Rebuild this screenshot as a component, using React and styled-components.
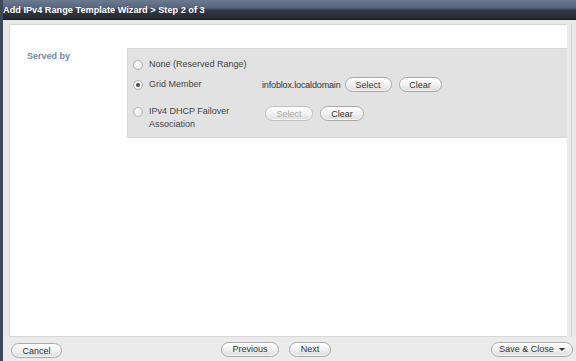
import React from "react";
import styled, { createGlobalStyle } from "styled-components";

const GlobalStyle = createGlobalStyle`
  html, body {
    margin: 0;
    padding: 0;
    background: #e9e9e9;
  }
  body {
    font-family: "Liberation Sans", Arial, sans-serif;
  }
`;

const App = () => {
  return (
    <>
      <GlobalStyle />
      <Window>
        <TitleBar>Add IPv4 Range Template Wizard &gt; Step 2 of 3</TitleBar>
        <Body>
          <Panel>
            <FieldRow>
              <FieldLabel>Served by</FieldLabel>
              <OptionBox>
                <OptionRow $height={14}>
                  <RadioLabel>
                    <Radio />
                    <span>None (Reserved Range)</span>
                  </RadioLabel>
                  <div />
                </OptionRow>
                <OptionRow $height={15} $gap={6}>
                  <RadioLabel>
                    <Radio checked />
                    <span>Grid Member</span>
                  </RadioLabel>
                  <Controls>
                    <MemberName>infoblox.localdomain</MemberName>
                    <PillButton $width={47}>Select</PillButton>
                    <PillButton $width={43}>Clear</PillButton>
                  </Controls>
                </OptionRow>
                <OptionRow $gap={13} $top>
                  <RadioLabel>
                    <Radio />
                    <span>
                      IPv4 DHCP Failover
                      <br />
                      Association
                    </span>
                  </RadioLabel>
                  <Controls $indent>
                    <PillButton $width={48} disabled>
                      Select
                    </PillButton>
                    <PillButton $width={44}>Clear</PillButton>
                  </Controls>
                </OptionRow>
              </OptionBox>
            </FieldRow>
          </Panel>
          <Gutter />
        </Body>
        <Footer>
          <div>
            <PillButton $width={51}>Cancel</PillButton>
          </div>
          <NavGroup>
            <PillButton $width={58}>Previous</PillButton>
            <PillButton $width={42}>Next</PillButton>
          </NavGroup>
          <RightGroup>
            <PillButton $width={82}>
              Save &amp; Close <Caret />
            </PillButton>
          </RightGroup>
        </Footer>
      </Window>
    </>
  );
};

export default App;

const Window = styled.div`
  width: 576px;
  height: 361px;
  display: flex;
  flex-direction: column;
  border-left: 3px solid #3e4858;
  box-sizing: border-box;
  background: #e9e9e9;
  overflow: hidden;
`;

const TitleBar = styled.div`
  height: 20px;
  margin-left: -3px;
  padding-left: 3px;
  display: flex;
  align-items: center;
  color: #ffffff;
  font-weight: bold;
  font-size: 9.2px;
  background: linear-gradient(
    #6d7b92 0%,
    #56647c 40%,
    #323844 55%,
    #26292f 100%
  );
  border-bottom: 1px solid #1c1e22;
  box-sizing: border-box;
`;

const Body = styled.div`
  flex: 1;
  display: flex;
  padding: 4px 0 0 6px;
  min-height: 0;
`;

const Panel = styled.div`
  flex: 1;
  background: #ffffff;
  border: 1px solid #d6d6d6;
  border-right: none;
  padding-top: 23px;
`;

const Gutter = styled.div`
  width: 9px;
  border-left: 1px solid #ececec;
  box-sizing: border-box;
  &::after {
    content: "";
    display: block;
    margin-left: 3px;
    width: 1px;
    height: 100%;
    background: #cfcfcf;
  }
`;

const FieldRow = styled.div`
  display: flex;
  align-items: flex-start;
`;

const FieldLabel = styled.div`
  width: 117px;
  box-sizing: border-box;
  padding: 2px 0 0 17px;
  color: #6e89a6;
  font-weight: bold;
  font-size: 9px;
  line-height: 12px;
`;

const OptionBox = styled.div`
  flex: 1;
  background: #e2e2e2;
  border: 1px solid #d6d6d6;
  border-right: none;
  padding: 8px 0 6px 5px;
  display: flex;
  flex-direction: column;
`;

const OptionRow = styled.div`
  display: grid;
  grid-template-columns: 129px 1fr;
  align-items: ${(p) => (p.$top ? "start" : "center")};
  height: ${(p) => (p.$height ? `${p.$height}px` : "auto")};
  margin-top: ${(p) => p.$gap || 0}px;
`;

const RadioLabel = styled.label`
  display: flex;
  align-items: flex-start;
  gap: 6px;
  color: #444444;
  font-size: 9px;
  line-height: 13px;
`;

const Radio = styled.span`
  width: 8px;
  height: 8px;
  margin-top: 2px;
  border-radius: 50%;
  border: 1px solid #b4b4b4;
  background: radial-gradient(circle at 50% 40%, #ffffff, #e4e4e4);
  display: flex;
  align-items: center;
  justify-content: center;
  flex-shrink: 0;
  &::after {
    content: "";
    display: ${(p) => (p.checked ? "block" : "none")};
    width: 4px;
    height: 4px;
    border-radius: 50%;
    background: #4a4a4a;
  }
`;

const Controls = styled.div`
  display: flex;
  align-items: center;
  gap: 7px;
  padding-left: ${(p) => (p.$indent ? "3px" : "0")};
  margin-top: ${(p) => (p.$indent ? "1px" : "0")};
`;

const MemberName = styled.span`
  color: #333333;
  font-size: 9px;
  letter-spacing: -0.15px;
  margin-right: -3px;
`;

const PillButton = styled.button`
  width: ${(p) => p.$width}px;
  height: 15px;
  padding: 0;
  border: 1px solid #a9a9a9;
  border-radius: 8px;
  background: linear-gradient(#ffffff 0%, #f2f2f2 50%, #dcdcdc 100%);
  box-shadow: inset 0 0 0 1px rgba(255, 255, 255, 0.7);
  font-family: "Liberation Sans", Arial, sans-serif;
  font-size: 9px;
  color: #333333;
  display: inline-flex;
  align-items: center;
  justify-content: center;
  gap: 5px;
  &:disabled {
    color: #a8a8a8;
    border-color: #c0c0c0;
  }
`;

const Caret = styled.span`
  width: 0;
  height: 0;
  border-left: 3px solid transparent;
  border-right: 3px solid transparent;
  border-top: 3px solid #333333;
  margin-top: 1px;
`;

const Footer = styled.div`
  height: 24px;
  display: grid;
  grid-template-columns: 210px auto 1fr;
  align-items: center;
  padding: 0 3px 0 8px;
  background: #ebebeb;
`;

const NavGroup = styled.div`
  display: flex;
  gap: 10px;
`;

const RightGroup = styled.div`
  display: flex;
  justify-content: flex-end;
`;
